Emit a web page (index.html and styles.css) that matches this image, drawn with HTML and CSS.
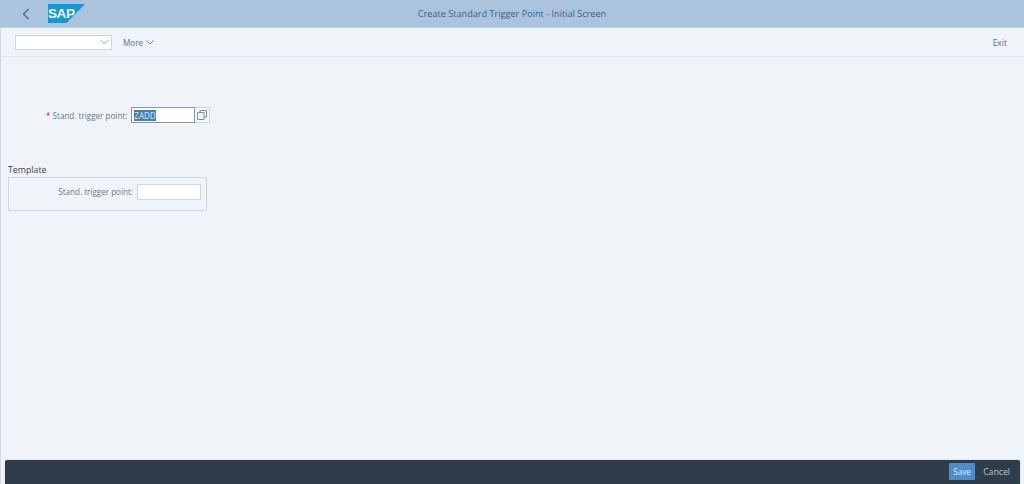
FILE: index.html
```html
<!DOCTYPE html>
<html lang="en">
<head>
<meta charset="utf-8">
<title>Create Standard Trigger Point - Initial Screen</title>
<link rel="stylesheet" href="styles.css">
</head>
<body>
<div class="app">
  <header class="shell">
    <button class="back" aria-label="Back">
      <svg width="8" height="12" viewBox="0 0 8 12"><path d="M6.500 1 1.500 6l5 5" fill="none" stroke="#44688b" stroke-width="1.300"/></svg>
    </button>
    <div class="logo">
      <svg class="logo-bg" width="37" height="19" viewBox="0 0 37 19"><polygon points="0,0 37,0 18.500,19 0,19" fill="#0f9ad8"/></svg>
      <span class="logo-text">SAP</span>
    </div>
    <h1 class="title">Create Standard Trigger Point - Initial Screen</h1>
  </header>
  <nav class="toolbar">
    <div class="select">
      <svg width="9" height="6" viewBox="0 0 9 6"><path d="M.5 1 4.500 5l4-4" fill="none" stroke="#93a1ae" stroke-width="1"/></svg>
    </div>
    <span class="more">More
      <svg width="8" height="5" viewBox="0 0 8 5"><path d="M.5.5 4 4 7.500.5" fill="none" stroke="#6a87a4" stroke-width="1"/></svg>
    </span>
    <span class="exit">Exit</span>
  </nav>
  <main class="content">
    <div class="row-main">
      <label class="label"><span class="req">*</span> Stand. trigger point:</label>
      <div class="input-main"><span class="sel">ZADD</span></div>
      <button class="help" aria-label="Value help">
        <svg width="10" height="10" viewBox="0 0 10 10"><path d="M3 2.500V.5h6.500V7H7.200M.5 2.500h6.500v7H.5z" fill="none" stroke="#7391b0" stroke-width="1"/></svg>
      </button>
    </div>
    <section class="template">
      <h2 class="group-title">Template</h2>
      <div class="group-box">
        <label class="label label-sub">Stand. trigger point:</label>
        <div class="input-sub"></div>
      </div>
    </section>
  </main>
  <footer class="footer">
    <button class="save">Save</button>
    <button class="cancel">Cancel</button>
  </footer>
</div>
</body>
</html>
```
FILE: styles.css
```css
* { box-sizing: border-box; }
html, body { margin: 0; height: 100%; }
body {
  background: #eff4f9;
  font-family: "Open Sans", "Noto Sans", "Liberation Sans", sans-serif;
  font-size: 8.100px;
  color: #5f6a75;
  overflow: hidden;
}
button { font: inherit; padding: 0; border: 0; background: none; }
.app {
  display: flex;
  flex-direction: column;
  height: 484px;
  border-left: 1px solid #d3d9e0;
}
.shell {
  position: relative;
  flex: none;
  height: 28px;
  display: flex;
  align-items: center;
  background: #a9c4dc;
  border-bottom: 1px solid #c0d3e4;
  margin-left: -1px;
}
.back { display: flex; margin-left: 22px; width: 8px; }
.logo { position: relative; width: 37px; height: 19px; margin-left: 18px; }
.logo-bg { display: block; }
.logo-text {
  position: absolute;
  left: 0;
  top: 2px;
  color: #fff;
  font: 700 13.500px/16px "Liberation Sans", sans-serif;
  letter-spacing: -.4px;
}
.title {
  position: absolute;
  left: 0;
  right: 0;
  margin: 0;
  text-align: center;
  font-size: 9.150px;
  font-weight: 400;
  color: #3f6184;
}
.toolbar {
  flex: none;
  height: 29px;
  display: flex;
  align-items: center;
  padding: 0 17px 0 14px;
  border-bottom: 1px solid #dde6ef;
  color: #56728f;
}
.select {
  width: 97px;
  height: 15px;
  display: flex;
  align-items: center;
  justify-content: flex-end;
  padding-right: 2px;
  background: #fff;
  border: 1px solid #cfd6dd;
}
.more { display: flex; align-items: center; gap: 3px; margin-left: 11px; }
.exit { margin-left: auto; font-size: 8.500px; }
.content { flex: 1; position: relative; padding-left: 7px; }
.row-main { display: flex; align-items: center; margin-top: 50px; margin-left: 38px; height: 16px; }
.label { white-space: nowrap; color: #6d7883; }
.req { color: #d9264a; }
.row-main .label { margin-right: 4px; }
.input-main {
  width: 64px;
  height: 16px;
  display: flex;
  align-items: center;
  padding-left: 2px;
  background: #fff;
  border: 1px solid #8996a3;
}
.sel { background: #4a7fb5; color: #dce8f3; line-height: 11px; }
.help {
  width: 15px;
  height: 16px;
  display: flex;
  align-items: center;
  justify-content: center;
  background: #f5f7fa;
  border: 1px solid #cfd6dd;
  border-left: 0;
}
.template { margin-top: 40px; }
.group-title { margin: 0; font-size: 8.800px; line-height: 14px; font-weight: 400; color: #3c4650; }
.group-box {
  width: 199px;
  height: 34px;
  display: flex;
  align-items: flex-start;
  justify-content: flex-end;
  gap: 4px;
  padding: 6px 5px 0 0;
  border: 1px solid #cfd6dd;
}
.label-sub { line-height: 16px; }
.input-sub { width: 64px; height: 16px; background: #fff; border: 1px solid #cfd6dd; }
.footer {
  flex: none;
  height: 24px;
  margin: 0 4px;
  display: flex;
  align-items: center;
  justify-content: flex-end;
  gap: 8px;
  padding: 0 10px 1px 0;
  background: #2f3c4a;
  border-radius: 2px 2px 0 0;
  box-shadow: 0 0 1px #8996a3;
}
.save { width: 26px; height: 17px; background: #4a8fcb; color: #e3eef8; border-radius: 1px; }
.cancel { color: #b9c6d3; font-size: 8.700px; }
```
